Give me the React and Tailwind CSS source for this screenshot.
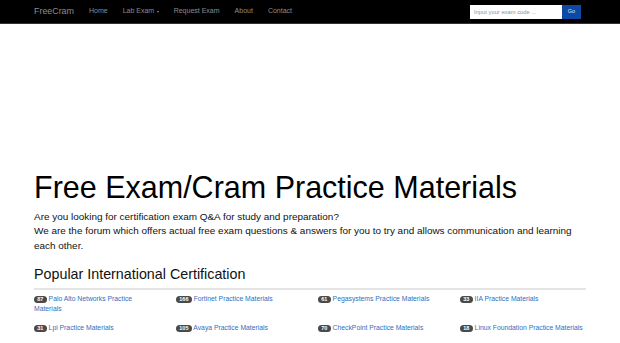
import React from "react";

const navLinks = ["Home", "Lab Exam", "Request Exam", "About", "Contact"];

const certs = [
  [87, "Palo Alto Networks"],
  [166, "Fortinet"],
  [61, "Pegasystems"],
  [33, "IIA"],
  [31, "Lpi"],
  [105, "Avaya"],
  [70, "CheckPoint"],
  [18, "Linux Foundation"],
  [412, "Cisco"],
  [298, "Microsoft"],
  [150, "CompTIA"],
  [120, "Oracle"],
];

const App = () => {
  return (
    <div className="min-h-screen bg-white font-['Liberation_Sans',Arial,sans-serif] text-black">
      {/* Navbar */}
      <nav className="h-[24px] bg-black border-b border-[#333]">
        <div className="mx-auto w-[552px] h-[23px] flex items-center">
          <span className="text-[8.9px] text-[#8c8c8c] mr-[7.5px]">FreeCram</span>
          {navLinks.map((item) => (
            <span key={item} className="px-[7.5px] text-[7px] text-[#8c8c8c] flex items-center">
              {item}
              {item === "Lab Exam" && (
                <span className="ml-[2.5px] w-0 h-0 border-l-[1.8px] border-r-[1.8px] border-t-[2.2px] border-l-transparent border-r-transparent border-t-[#8c8c8c]" />
              )}
            </span>
          ))}
          <div className="ml-auto mr-[5px] flex h-[14px]">
            <input
              className="w-[92px] h-[14px] bg-white px-[4px] text-[5.8px] text-[#555] placeholder:text-[#8f8f8f] outline-none"
              placeholder="Input your exam code ..."
            />
            <button className="w-[19px] h-[14px] bg-[#0e4aa3] text-[5.5px] text-[#d5e2f5]">Go</button>
          </div>
        </div>
      </nav>

      {/* ad slot */}
      <div className="h-[147px]" />

      <div className="mx-auto w-[552px]">
        <h1 className="text-[30.5px] leading-[1.1] text-black">Free Exam/Cram Practice Materials</h1>
        <p className="mt-[5.5px] text-[9.95px] leading-[14.3px] text-[#111]">
          Are you looking for certification exam Q&amp;A for study and preparation?
          <br />
          We are the forum which offers actual free exam questions &amp; answers for you to try and allows communication and learning each other.
        </p>

        <h2 className="mt-[14px] text-[14.3px] leading-[1.1] text-[#111]">Popular International Certification</h2>
        <div className="mt-[5px] h-[2px] bg-[#e4e4e4]" />

        <div className="mt-[4.5px] -mx-[8px] grid grid-cols-4 gap-y-[9px]">
          {certs.map(([count, name]) => (
            <div key={name} className="px-[8px] text-[6.8px] leading-[10px]">
              <span className="inline-block align-middle h-[7px] leading-[7px] px-[3.3px] rounded-full bg-[#4a4a4a] text-[5.5px] font-bold text-white">
                {count}
              </span>{" "}
              <a className="text-[#2f6fbe]">{name} Practice Materials</a>
            </div>
          ))}
        </div>
      </div>
    </div>
  );
};

export default App;
